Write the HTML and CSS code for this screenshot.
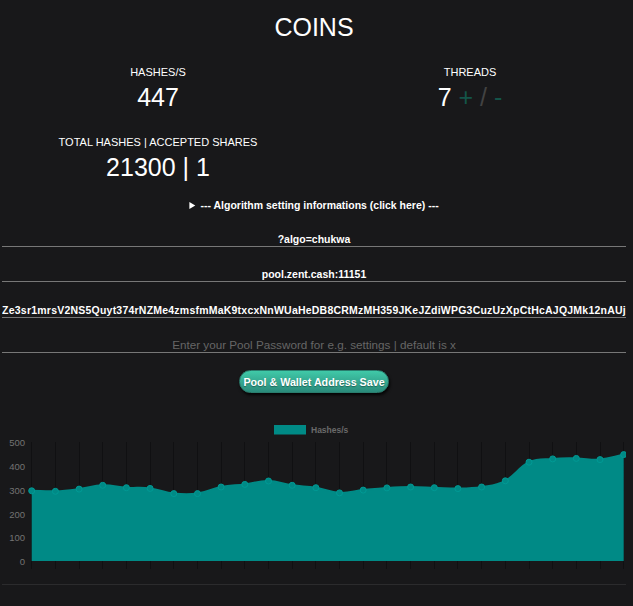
FILE: index.html
```html
<!DOCTYPE html>
<html lang="en">
<head>
<meta charset="utf-8">
<title>COINS</title>
<link rel="stylesheet" href="styles.css">
</head>
<body>
<div class="page">
  <h1 class="title">COINS</h1>

  <div class="stats">
    <div class="stat">
      <div class="stat-label">HASHES/S</div>
      <div class="stat-value">447</div>
    </div>
    <div class="stat">
      <div class="stat-label">THREADS</div>
      <div class="stat-value">7 <span class="thr-btn">+</span> <span class="thr-sep">/</span> <span class="thr-btn">-</span></div>
    </div>
    <div class="stat">
      <div class="stat-label">TOTAL HASHES | ACCEPTED SHARES</div>
      <div class="stat-value">21300 | 1</div>
    </div>
  </div>

  <details class="algo">
    <summary class="algo-summary">--- Algorithm setting informations (click here) ---</summary>
  </details>

  <input class="field" type="text" value="?algo=chukwa">
  <input class="field" type="text" value="pool.zent.cash:11151">
  <input class="field field-address" type="text" value="Ze3sr1mrsV2NS5Quyt374rNZMe4zmsfmMaK9txcxNnWUaHeDB8CRMzMH359JKeJZdiWPG3CuzUzXpCtHcAJQJMk12nAUj">
  <input class="field" type="text" placeholder="Enter your Pool Password for e.g. settings | default is x">

  <button class="save-btn" type="button">Pool &amp; Wallet Address Save</button>

  <div class="chart">
    <svg class="chart-svg" width="624" height="179" viewBox="2 405 624 179">
      <rect x="274" y="425" width="32" height="9.5" class="legend-box"/>
      <text x="311" y="433" class="legend-text">Hashes/s</text>

      <g class="y-labels">
        <text x="25" y="445.5">500</text>
        <text x="25" y="469.5">400</text>
        <text x="25" y="493.5">300</text>
        <text x="25" y="517.5">200</text>
        <text x="25" y="541">100</text>
        <text x="25" y="564.5">0</text>
      </g>

      <path class="grid" d="M31.5 442V569M55.5 442V569M79.5 442V569M102.5 442V569M126.5 442V569M150.5 442V569M173.5 442V569M197.5 442V569M221.5 442V569M244.5 442V569M268.5 442V569M292.5 442V569M315.5 442V569M339.5 442V569M363.5 442V569M386.5 442V569M410.5 442V569M434.5 442V569M457.5 442V569M481.5 442V569M505.5 442V569M529.5 442V569M552.5 442V569M576.5 442V569M600.5 442V569M623.5 442V569"/>

      <path class="area" d="M31.7 490.8 C41.2 491.0 45.9 491.6 55.4 491.3 C64.9 491.0 69.6 490.3 79.1 489.1 C88.6 487.9 93.2 485.6 102.7 485.3 C112.2 485.0 116.9 487.1 126.4 487.7 C135.9 488.3 140.6 487.2 150.1 488.4 C159.6 489.6 164.3 492.6 173.8 493.6 C183.3 494.6 188.0 494.9 197.5 493.6 C207.0 492.3 211.6 488.8 221.1 487.0 C230.6 485.2 235.3 485.6 244.8 484.4 C254.3 483.2 259.0 480.8 268.5 481.0 C278.0 481.2 282.7 484.0 292.2 485.3 C301.7 486.6 306.4 486.2 315.9 487.7 C325.4 489.2 330.0 492.4 339.5 492.9 C349.0 493.4 353.7 491.1 363.2 490.1 C372.7 489.1 377.4 488.5 386.9 487.9 C396.4 487.3 401.1 487.0 410.6 487.0 C420.1 487.0 424.8 487.4 434.3 487.7 C443.8 488.0 448.4 488.7 457.9 488.6 C467.4 488.5 472.1 488.6 481.6 487.0 C491.1 485.4 495.8 485.8 505.3 480.8 C514.8 475.8 519.5 466.6 529.0 462.2 C538.5 457.8 543.2 459.7 552.7 458.9 C562.2 458.1 566.8 458.3 576.3 458.4 C585.8 458.5 590.5 460.4 600.0 459.6 C609.5 458.8 614.2 456.6 623.7 454.6 L623.7 561 L31.7 561 Z"/>
      <path class="line" d="M31.7 490.8 C41.2 491.0 45.9 491.6 55.4 491.3 C64.9 491.0 69.6 490.3 79.1 489.1 C88.6 487.9 93.2 485.6 102.7 485.3 C112.2 485.0 116.9 487.1 126.4 487.7 C135.9 488.3 140.6 487.2 150.1 488.4 C159.6 489.6 164.3 492.6 173.8 493.6 C183.3 494.6 188.0 494.9 197.5 493.6 C207.0 492.3 211.6 488.8 221.1 487.0 C230.6 485.2 235.3 485.6 244.8 484.4 C254.3 483.2 259.0 480.8 268.5 481.0 C278.0 481.2 282.7 484.0 292.2 485.3 C301.7 486.6 306.4 486.2 315.9 487.7 C325.4 489.2 330.0 492.4 339.5 492.9 C349.0 493.4 353.7 491.1 363.2 490.1 C372.7 489.1 377.4 488.5 386.9 487.9 C396.4 487.3 401.1 487.0 410.6 487.0 C420.1 487.0 424.8 487.4 434.3 487.7 C443.8 488.0 448.4 488.7 457.9 488.6 C467.4 488.5 472.1 488.6 481.6 487.0 C491.1 485.4 495.8 485.8 505.3 480.8 C514.8 475.8 519.5 466.6 529.0 462.2 C538.5 457.8 543.2 459.7 552.7 458.9 C562.2 458.1 566.8 458.3 576.3 458.4 C585.8 458.5 590.5 460.4 600.0 459.6 C609.5 458.8 614.2 456.6 623.7 454.6"/>

      <g class="points">
        <circle cx="31.7" cy="490.8" r="3"/>
        <circle cx="55.4" cy="491.3" r="3"/>
        <circle cx="79.1" cy="489.1" r="3"/>
        <circle cx="102.7" cy="485.3" r="3"/>
        <circle cx="126.4" cy="487.7" r="3"/>
        <circle cx="150.1" cy="488.4" r="3"/>
        <circle cx="173.8" cy="493.6" r="3"/>
        <circle cx="197.5" cy="493.6" r="3"/>
        <circle cx="221.1" cy="487.0" r="3"/>
        <circle cx="244.8" cy="484.4" r="3"/>
        <circle cx="268.5" cy="481.0" r="3"/>
        <circle cx="292.2" cy="485.3" r="3"/>
        <circle cx="315.9" cy="487.7" r="3"/>
        <circle cx="339.5" cy="492.9" r="3"/>
        <circle cx="363.2" cy="490.1" r="3"/>
        <circle cx="386.9" cy="487.9" r="3"/>
        <circle cx="410.6" cy="487.0" r="3"/>
        <circle cx="434.3" cy="487.7" r="3"/>
        <circle cx="457.9" cy="488.6" r="3"/>
        <circle cx="481.6" cy="487.0" r="3"/>
        <circle cx="505.3" cy="480.8" r="3"/>
        <circle cx="529.0" cy="462.2" r="3"/>
        <circle cx="552.7" cy="458.9" r="3"/>
        <circle cx="576.3" cy="458.4" r="3"/>
        <circle cx="600.0" cy="459.6" r="3"/>
        <circle cx="623.7" cy="454.6" r="3"/>
      </g>
    </svg>
  </div>
</div>
</body>
</html>
```

FILE: styles.css
```css
html, body {
  margin: 0;
  padding: 0;
  background: #18181a;
  color: #ffffff;
  font-family: "Liberation Sans", Arial, sans-serif;
}

.page {
  width: 624px;
  margin: 0 0 0 2px;
}

.title {
  margin: 13px 0 0;
  font-size: 25px;
  line-height: 28px;
  font-weight: normal;
  text-align: center;
}

.stats {
  display: grid;
  grid-template-columns: 1fr 1fr;
  row-gap: 25px;
  margin-top: 25px;
}

.stat {
  text-align: center;
}

.stat-label {
  font-size: 11px;
  line-height: 13px;
}

.stat-value {
  margin-top: 4px;
  font-size: 25px;
  line-height: 28px;
}

.thr-btn {
  color: #145449;
}

.thr-sep {
  color: #424242;
}

.algo {
  margin-top: 17px;
}

.algo-summary {
  font-size: 10.5px;
  line-height: 14px;
  font-weight: bold;
  text-align: center;
  cursor: pointer;
}

.field {
  display: block;
  box-sizing: border-box;
  width: 624px;
  height: 20px;
  margin: 15.35px 0 0;
  padding: 5px 0 0;
  border: none;
  border-bottom: 1px solid #777777;
  background: transparent;
  color: #ffffff;
  font-family: "Liberation Sans", Arial, sans-serif;
  font-size: 10.5px;
  font-weight: bold;
  text-align: center;
  outline: none;
}

.field:first-of-type {
  margin-top: 15px;
}

.field-address {
  letter-spacing: 0.22px;
}

.field::placeholder {
  color: #666666;
  font-weight: normal;
  font-size: 11.7px;
}

.save-btn {
  display: block;
  box-sizing: border-box;
  width: 150px;
  height: 23px;
  margin: 17px auto 0;
  padding: 0;
  border: 1px solid #2a7d6e;
  border-radius: 12px;
  background: linear-gradient(#40c9a8, #2a8b7b);
  box-shadow: 1px 2px 3px rgba(0, 0, 0, 0.85);
  color: #ffffff;
  font-family: "Liberation Sans", Arial, sans-serif;
  font-size: 10.7px;
  font-weight: bold;
  text-shadow: 0 1px 1px rgba(0, 0, 0, 0.35);
  cursor: pointer;
}

.chart {
  margin-top: 12px;
  border-bottom: 1px solid #2b2b2d;
}

.chart-svg {
  display: block;
}

.legend-box {
  fill: #008a86;
}

.legend-text {
  font-family: "Liberation Sans", Arial, sans-serif;
  font-size: 8.5px;
  font-weight: bold;
  fill: #6a6a6a;
}

.y-labels text {
  font-family: "Liberation Sans", Arial, sans-serif;
  font-size: 9.5px;
  fill: #737373;
  text-anchor: end;
}

.grid {
  stroke: #101012;
  stroke-width: 1;
  fill: none;
}

.area {
  fill: #008a86;
}

.line {
  fill: none;
  stroke: #008a86;
  stroke-width: 2;
}

.points circle {
  fill: #008a86;
  stroke: #009a95;
  stroke-width: 1;
}
```
